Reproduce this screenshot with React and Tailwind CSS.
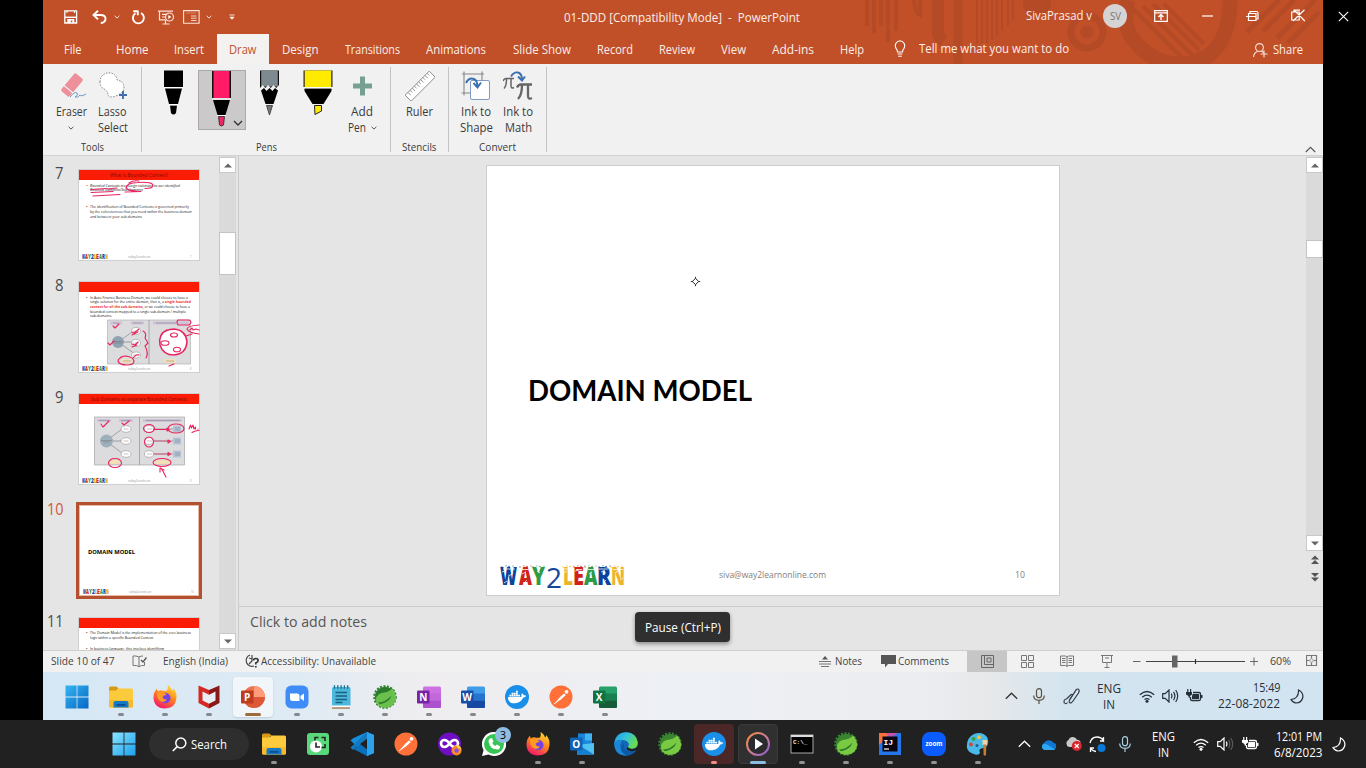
import React, { useLayoutEffect, useRef } from "react";
import { FaDocker } from "react-icons/fa";

/* Text run squeezed or stretched horizontally to occupy a given width. */
function Fit({ w, className = "", children }) {
  const ref = useRef(null);
  useLayoutEffect(() => {
    const el = ref.current;
    el.style.transform = "none";
    const natural = el.getBoundingClientRect().width;
    if (natural > 0) el.style.transform = `scaleX(${w / natural})`;
  }, [w, children]);
  return (
    <span className={"block shrink-0 whitespace-nowrap " + className} style={{ width: w }}>
      <span ref={ref} className="inline-block origin-left whitespace-nowrap">{children}</span>
    </span>
  );
}

function Svg({ w, h, vb, className = "", children }) {
  return (
    <svg width={w} height={h} viewBox={vb || `0 0 ${w} ${h}`} fill="none" className={"block shrink-0 " + className}>
      {children}
    </svg>
  );
}

/* ---------- title bar ---------- */

function HeaderArt() {
  return (
    <Svg w={1280} h={64} vb="43 0 1280 64" className="absolute left-0 top-0">
      <g stroke="#ad4725" opacity="0.6">
        <path d="M867 0V26M874 0V33M881 0V26M888 0V42M896 0V31" strokeWidth="4" />
        <path d="M914 0q1 12 6 15V0" strokeWidth="4" />
        <path d="M938 0v32q0 5 6 9" strokeWidth="12" />
        <path d="M958 0V64" strokeWidth="9" />
        <path d="M977 0V43M982 0V43M987 0V43M992 0V40M997 0V36M1002 0V31M1008 0V26M1013 0V20" strokeWidth="2" />
        <circle cx="1087" cy="32" r="16" strokeWidth="7" />
        <circle cx="1087" cy="32" r="6" fill="#ad4725" />
        <path d="M1128 0q-8 25 8 43q18 21 45 21q48-2 49-64" strokeWidth="15" />
        <path d="M1132 8l50 50M1143 6l50 50M1153 4l46 46M1164 4l40 40" strokeWidth="4" />
        <path d="M1247 32l32-32M1263 31l31-31M1277 38l38-38M1288 43l31-31" strokeWidth="5" />
      </g>
      <path d="M1023 0q-1 15 13 15q16 0 15-15z" fill="#ad4725" opacity="0.6" />
    </Svg>
  );
}

const Chev = ({ c = "#fbe3da", className = "" }) => (
  <Svg w={6} h={4} className={className}><path d="M.6.8 3 3.1 5.4.8" stroke={c} /></Svg>
);

function TitleBar() {
  return (
    <div className="relative flex h-[34px] items-center text-[12px] leading-[16px] text-[#fdeee8]">
      <Svg w={14} h={14} className="ml-[20.5px]">
        <path d="M.8.8h11.8v12.2H.8z" stroke="#fff" strokeWidth="1.3" /><path d="M1 7.3h11.5" stroke="#fff" strokeWidth="1.4" /><path d="M3.3 9h7v4h-2v-2.500h-1.500v2.500H3.300z" fill="#fff" /><path d="M3 1v2M10.500 1v2" stroke="#fff" />
      </Svg>
      <Svg w={16} h={14} className="ml-[14px]">
        <path d="M6 .8 1.500 5 6 9.200M2 5h6.500q5 0 5 3.800T8.800 13" stroke="#fff" strokeWidth="1.900" />
      </Svg>
      <Chev className="ml-[6px]" />
      <Svg w={15} h={15} className="ml-[11.5px]">
        <path d="M4.500 3.200A5.500 5.500 0 1 0 10 3M6.800.5v4.800M2.300 1.200h4.500" stroke="#fff" strokeWidth="1.900" />
      </Svg>
      <Svg w={17} h={15} className="ml-[12px]">
        <path d="M0 1.200h15M1.500 1.500v8.300h6M4 4.300h5M4 7h3M7.500 10v3.500M4.500 14h7" stroke="#fbe3da" strokeWidth="1.200" /><circle cx="11.500" cy="7" r="4" stroke="#fbe3da" strokeWidth="1.200" /><path d="M10.300 5v4l3-2z" fill="#fff" />
      </Svg>
      <Svg w={17} h={14} className="ml-[8px]">
        <path d="M.6.6h15.500v12.600H.6z" stroke="#fbe3da" strokeWidth="1.100" /><path d="M8 6h5.500M8 8.200h5.500M8 10.500h5.500" stroke="#fbe3da" strokeWidth=".9" /><path d="M3 3h10" stroke="#d98468" />
      </Svg>
      <Chev className="ml-[6px]" />
      <Svg w={6} h={6} className="ml-[17px]"><path d="M.5 1h5M1 3.200h4L3 5.200z" stroke="#fff" fill="#fff" strokeWidth=".8" /></Svg>
      <Fit w={236} className="ml-[329px] pt-[2px]">01-DDD [Compatibility Mode]&nbsp; -&nbsp; PowerPoint</Fit>
      <Fit w={66} className="ml-[226px] -mt-[2px]">SivaPrasad v</Fit>
      <span className="ml-[11px] -mt-[3px] flex h-[24px] w-[24px] items-center justify-center rounded-full bg-[#d5d3d4] text-[10px] text-[#777]"><Fit w={11}>SV</Fit></span>
      <Svg w={14} h={12} className="ml-[27px] -mt-[3px]"><path d="M.7.7h12.600v10.600H.7zM.7 2.800h12.600" stroke="#fff" strokeWidth="1.200" /><path d="M7 10V5M4.500 7 7 4.500 9.500 7" stroke="#fff" strokeWidth="1.400" /></Svg>
      <Svg w={11} h={2} className="ml-[34px] -mt-[3px]"><path d="M0 1h11" stroke="#fff" strokeWidth="1.200" /></Svg>
      <Svg w={14} h={12} className="ml-[33px] -mt-[3px]"><path d="M2.500 3.500h7.500v7H2.500zM4 3V1.500h6.300q1.700 0 1.700 1.700V9h-1.500M0 6.500h10" stroke="#fff" strokeWidth="1.200" /></Svg>
      <Svg w={15} h={13} className="ml-[31px] -mt-[3px]"><path d="M.7 3h7.500v8H.7zM3 3V1.200h6M2 12 13.500.8M3 .8 13.800 12" stroke="#fff" strokeWidth="1.200" /></Svg>
    </div>
  );
}

const tab = "flex h-full items-center justify-center pt-px ";

function Tabs() {
  return (
    <div className="relative flex h-[30px] text-[12.5px] leading-[16px] text-[#fdeee8]">
      <div className={tab + "ml-[8px] w-[43px]"}><Fit w={17.500}>File</Fit></div>
      <div className={tab + "ml-[9px] w-[58px]"}><Fit w={32.500}>Home</Fit></div>
      <div className={tab + "w-[56px]"}><Fit w={30}>Insert</Fit></div>
      <div className={tab + "w-[52px] bg-[#f3f2f1] text-[#c0522f]"}><Fit w={27.500}>Draw</Fit></div>
      <div className={tab + "w-[63px]"}><Fit w={36.500}>Design</Fit></div>
      <div className={tab + "w-[81px]"}><Fit w={55}>Transitions</Fit></div>
      <div className={tab + "w-[86px]"}><Fit w={60}>Animations</Fit></div>
      <div className={tab + "w-[85px]"}><Fit w={58}>Slide Show</Fit></div>
      <div className={tab + "w-[61px]"}><Fit w={36}>Record</Fit></div>
      <div className={tab + "w-[64px]"}><Fit w={36}>Review</Fit></div>
      <div className={tab + "w-[49px]"}><Fit w={25}>View</Fit></div>
      <div className={tab + "w-[69px]"}><Fit w={42}>Add-ins</Fit></div>
      <div className={tab + "w-[50px]"}><Fit w={24}>Help</Fit></div>
      <Svg w={12} h={18} className="ml-[17px] mt-[6px]"><path d="M3.500 12q0-2-1.300-3.400A5 5 0 0 1 6 .8a5 5 0 0 1 3.800 7.800Q8.500 10 8.500 12zM3.700 14h4.600M4.200 16.300h3.600" stroke="#fff" strokeWidth="1.100" /></Svg>
      <div className="ml-[13px] flex items-center"><Fit w={150}>Tell me what you want to do</Fit></div>
      <Svg w={15} h={15} className="ml-[184px] mt-[9px]"><circle cx="6.500" cy="4.500" r="3.900" stroke="#fbe3da" strokeWidth="1.100" /><path d="M.6 14q0-4 4-5.500M8.500 8l2 1.500M11 7.500v7M7.500 11h7" stroke="#fbe3da" strokeWidth="1.100" /></Svg>
      <div className="ml-[5px] flex items-center pt-px"><Fit w={30}>Share</Fit></div>
    </div>
  );
}

/* ---------- ribbon ---------- */

const Divider = () => <div className="mt-[3px] h-[85px] w-px shrink-0 bg-[#c4c4c4]" />;
const groupLabel = "flex h-[17px] items-center justify-center text-[11px] leading-[14px] pt-px";

function RibbonButton({ icon, lines, chevron, className }) {
  return (
    <div className={"flex shrink-0 flex-col items-center " + className}>
      <div className="flex h-[40px] items-start justify-center pt-[7px]">{icon}</div>
      {lines.map(([t, w], i) => (
        <div key={i} className="flex h-[16px] items-center gap-[5px]">
          <Fit w={w}>{t}</Fit>
          {chevron && i === lines.length - 1 && lines.length > 1 && <Chev c="#555" />}
        </div>
      ))}
      {chevron && lines.length === 1 && <Chev c="#555" className="mt-[6px]" />}
    </div>
  );
}

function Ribbon() {
  return (
    <div className="flex h-[92px] border-b border-[#d2d2d2] bg-[#f1f1f1] text-[12.5px] leading-[16px] text-[#3b3b3b]">
      <div className="flex w-[98px] flex-col">
        <div className="flex h-[75px] pl-[7px]">
          <RibbonButton className="w-[42px]" chevron lines={[["Eraser", 31]]}
            icon={<Svg w={28} h={28} className="ml-[3px]"><g transform="rotate(-50 13 14)"><rect x="1.500" y="8.500" width="23" height="11" rx="2" fill="#ee8f9c" /><path d="M7.500 8v12" stroke="#f6f1f1" strokeWidth="1.200" /></g><path d="M11 26q5-6 7-4t-2 4q3 1 5-2 1 2 6-1" stroke="#6d9bc8" strokeWidth="1" /></Svg>} />
          <RibbonButton className="w-[41px]" lines={[["Lasso", 28.500], ["Select", 30]]}
            icon={<Svg w={28} h={28}><path d="M1 11C1 4 7 1 12 2q6 2 6 7 7 1 7 8 0 4-6 7-8 4-10 0 0-4-4-6-4-2-4-7z" fill="#fff" stroke="#777" strokeWidth=".9" strokeDasharray="1.500 1.300" /><path d="M24 20v8M20 24h8" stroke="#416eab" strokeWidth="1.900" /></Svg>} />
        </div>
        <div className={groupLabel}><Fit w={23}>Tools</Fit></div>
      </div>
      <Divider />
      <div className="flex w-[248px] flex-col">
        <div className="flex h-[75px] pl-[8px]">
          <Svg w={48} h={61} className="mt-[6px]"><path d="M14 .5h19v16.500H14zM15 18.500h17L28 34h-9zM20 35.500h7L26 43q-2.500 3-5 0z" fill="#000" /><path d="M14 17.500h19M19 34.700h9" stroke="#fff" strokeWidth="1.200" /></Svg>
          <div className="mt-[6px] flex h-[60px] w-[48px] border border-[#aaa] bg-[#cbc9ca]">
            <Svg w={46} h={58} vb="1 1 46 58"><path d="M14 0h19v28H14z" fill="#111" /><path d="M15.500 0h16v28h-16z" fill="#ff1b66" /><path d="M15 30h17l-4.500 15h-8z" fill="#000" /><path d="M14 29h19M19 45.600h9" stroke="#fff" strokeWidth="1.200" /><path d="M20.500 46.500h6L25.500 55q-2 2-4 0z" fill="#ee2862" stroke="#222" strokeWidth=".8" /><path d="M36 51l4 4 4-4" stroke="#333" strokeWidth="1.300" /></Svg>
          </div>
          <Svg w={48} h={61} className="mt-[6px]"><path d="M14 .5h19v20H14z" fill="#111" /><path d="M15.200.5h16.600v16H15.200z" fill="#7e8a90" /><path d="M14 18l2.700-3 2.700 3 2.700-3 2.700 3 2.700-3 2.700 3L33 15v6H14z" fill="#f1f1f1" /><path d="M15 20.500l3-2.500 2.500 3 3-3 3 3 2.500-3 3 2.500L27.500 34h-8z" fill="#000" /><path d="M20.500 35.500h6L23.500 45z" fill="#777" stroke="#333" strokeWidth=".8" /></Svg>
          <Svg w={48} h={61} className="mt-[6px]"><path d="M9.500.5h29V17h-29z" fill="#222" /><path d="M10.700.5h26.600V17H10.700z" fill="#ffeb00" /><path d="M10.500 18.500h27v2.500L29.500 34h-11l-8-13z" fill="#000" /><path d="M20.500 35.500h7V41l-6.500 3.500z" fill="#ffeb00" stroke="#222" /><path d="M10 17.700h28" stroke="#fff" /></Svg>
          <RibbonButton className="w-[40px]" chevron lines={[["Add", 22], ["Pen", 18]]}
            icon={<Svg w={19} h={30}><path d="M9.500 5.500v19M0 15h19" stroke="#76a192" strokeWidth="5" /></Svg>} />
        </div>
        <div className={groupLabel}><Fit w={21}>Pens</Fit></div>
      </div>
      <Divider />
      <div className="flex w-[57px] flex-col">
        <div className="flex h-[75px] justify-center">
          <RibbonButton className="w-[40px]" lines={[["Ruler", 27]]}
            icon={<Svg w={30} h={30}><g transform="rotate(-45 15 15)"><rect x="-2" y="11" width="34" height="8.500" fill="#fff" stroke="#888" strokeWidth=".9" /><path d="M2 11v4M5 11v3M8 11v4M11 11v3M14 11v4M17 11v3M20 11v4M23 11v3M26 11v4M29 11v3" stroke="#888" strokeWidth=".9" /></g></Svg>} />
        </div>
        <div className={groupLabel + " -ml-px"}><Fit w={34.500}>Stencils</Fit></div>
      </div>
      <Divider />
      <div className="flex w-[97px] flex-col">
        <div className="flex h-[75px] pl-[6px]">
          <RibbonButton className="w-[42px]" lines={[["Ink to", 30], ["Shape", 33]]}
            icon={<Svg w={30} h={30}><path d="M1 3h22M3 .5v24M21 .5V9M.5 22H9" stroke="#888" strokeWidth="1.100" /><rect x="9.500" y="9.500" width="19" height="19" rx="1.500" fill="#fff" stroke="#7f9cc4" /><path d="M5 12q3-6 8-4 3 1 3.500 7M12.500 12l4 4.500 3.500-5" stroke="#3b6fae" strokeWidth="1.900" /></Svg>} />
          <RibbonButton className="w-[42px]" lines={[["Ink to", 30], ["Math", 27]]}
            icon={<Svg w={30} h={30}><path d="M0 10q1-2.500 3-2.500h8M3.500 8q0 7-2.500 9.500M8 8v7q0 3 3 1.500" stroke="#666" strokeWidth="1.500" /><path d="M14 16.500q1.500-3 4-3h11M19 14q0 10-4 14M25 14v11q0 4 4 2" stroke="#666" strokeWidth="2.300" /><path d="M8 5.500Q11 .5 15 1.500q3.500 1 4 6M15 5.500l4 4 3-4" stroke="#3b6fae" strokeWidth="1.900" /></Svg>} />
        </div>
        <div className={groupLabel}><Fit w={37}>Convert</Fit></div>
      </div>
      <Divider />
      <Svg w={11} h={7} className="ml-[757.5px] mt-[82px]"><path d="M.8 6l4.700-4.700L10.200 6" stroke="#555" strokeWidth="1.100" /></Svg>
    </div>
  );
}

/* ---------- slides ---------- */

const LETTERS = [
  ["W", 17, 2, "text-[#0b449c]"], ["A", 13, 0, "text-[#cf2317]"], ["Y", 13, 1.5, "text-[#2f9a47]"], ["2", 16, 0.5, "text-[#17459a]"],
  ["L", 10, 0, "text-[#ecb32d]"], ["E", 11, 0, "text-[#cf2317]"], ["A", 13.5, 0, "text-[#2f9a47]"], ["R", 14, 0, "text-[#0b449c]"], ["N", 14, 0, "text-[#ecb32d]"],
];
const DOTS = ["#0b449c", "#cf2317", "#2f9a47", "#ecb32d", "#cf2317", "#2f9a47", "#0b449c", "#ecb32d"];
const DOTX = [2, 20, 33, 63, 74, 85, 99, 111];

function Logo() {
  return (
    <div className="relative flex h-[28px] w-[126px] items-end font-extrabold leading-[28px]">
      {LETTERS.map(([t, w, gap, c], i) => (
        <div key={i} className={c + (t === "2" ? " -mb-[2px] text-[27px] font-normal" : " text-[24px]")} style={{ marginRight: gap }}><Fit w={w}>{t}</Fit></div>
      ))}
      <Svg w={126} h={28} className="absolute left-0 top-0">
        {DOTX.map((x, i) => (
          <g key={i} fill={DOTS[i]} opacity=".85">
            <circle cx={x} cy="5" r=".7" /><circle cx={x + 4} cy="3.800" r=".6" /><circle cx={x + 7} cy="4.600" r=".8" /><circle cx={x + 11} cy="4" r=".6" />
          </g>
        ))}
        <g stroke="#fff" strokeWidth=".9" opacity=".85"><path d="M2 10l3-1M9 14l4-3M22 12l4-2M37 9l3 2M64 11l3-2M75 9l4-1M89 12l3-2M101 10l4-2M115 11l3-2M4 21l3-2M25 20l2-2M78 19l3-1M104 20l2-2M120 18l3-2M3 7h12M21 7.500h9M64 7h4M76 7.500h6M88 7.500h6M99 7h9M113 7.500h10" /></g>
      </Svg>
    </div>
  );
}

const MINI_LETTERS = "WAY2LEARN".split("");
const MINI_TXT = ["text-[#0b449c]", "text-[#cf2317]", "text-[#2f9a47]", "text-[#17459a]", "text-[#dda320]", "text-[#cf2317]", "text-[#2f9a47]", "text-[#0b449c]", "text-[#dda320]"];

function ThumbFooter({ n }) {
  return (
    <div className="flex h-[7px] items-center pl-[3px] text-[3px] leading-[6px] text-[#8a8a8a]">
      <div className="flex w-[26px] text-[6px] font-extrabold">
        {MINI_LETTERS.map((l, i) => <Fit key={i} w={2.900} className={MINI_TXT[i]}>{l}</Fit>)}
      </div>
      <Fit w={22} className="ml-[20px]">siva@way2learnonline.com</Fit>
      <Fit w={n > 9 ? 2.500 : 1.300} className="ml-[40px]">{n}</Fit>
    </div>
  );
}

function ThumbRow({ n, selected, children }) {
  return (
    <div className="flex h-[112px] shrink-0">
      <div className={"flex w-[20px] justify-end text-[15.5px] leading-[20px] -mt-[6px] " + (selected ? "text-[#cb5a3a]" : "text-[#4a4a4a]")}>
        <Fit w={n > 9 ? 16.500 : 8.500}>{n}</Fit>
      </div>
      {selected ? (
        <div className="-mt-[3px] ml-[13px] h-[97px] w-[126px] border-[3px] border-[#b3502f] bg-white">{children}</div>
      ) : (
        <div className="ml-[15px] h-[92px] w-[122px] border border-[#cfcfcf] bg-white">{children}</div>
      )}
    </div>
  );
}

function Ink({ children }) {
  return <Svg w={121} h={91} className="absolute left-0 top-0"><g stroke="#e8245f" strokeWidth="1.100" strokeLinecap="round" strokeLinejoin="round">{children}</g></Svg>;
}

const Bar = ({ w, children }) => (
  <div className="flex h-[9.500px] items-center justify-center bg-[#fb1c05] text-[5px] leading-[8px] text-[#7a0d04]">{children && <Fit w={w}>{children}</Fit>}</div>
);
const Line = ({ w, bullet, children, className = "" }) => (
  <div className={"flex h-[4.700px] items-center pl-[7px] " + className}><span className="w-[4px]">{bullet ? "•" : ""}</span><Fit w={w}>{children}</Fit></div>
);

function Diagram9() {
  return (
    <Svg w={121} h={91} className="absolute left-0 top-0">
      <path d="M15.500 23h90v48h-90z" fill="#dcdcde" stroke="#999" strokeWidth=".6" /><path d="M60.500 23v48" stroke="#999" strokeWidth=".8" />
      <path d="M18 25h14v3H18zM40 25h14v3H40zM64 25h39v3H64z" fill="#cdc2d8" />
      <path d="M27 47l16-12M27 47h16M27 47l16 12M74 35h22M74 47h22M74 60h22" stroke="#777" strokeWidth=".6" />
      <circle cx="27.500" cy="47" r="6.500" fill="#9fb0bd" />
      <g fill="#fff" stroke="#999" strokeWidth=".6"><ellipse cx="47" cy="35" rx="5" ry="3.300" /><ellipse cx="47" cy="47" rx="5" ry="3.300" /><ellipse cx="47" cy="60" rx="5" ry="3.300" /><ellipse cx="70" cy="35" rx="4.500" ry="3.300" /><ellipse cx="70" cy="47" rx="4.500" ry="3.300" /><ellipse cx="70" cy="60" rx="4.500" ry="3.300" /></g>
      <path d="M94 31.500h8v7h-8zM94 43.500h8v7h-8zM94 56.500h8v7h-8z" fill="#b4c3d6" />
      <path d="M31 66h10v4H31zM77 66h14v4H77z" fill="#f3dfb8" />
      <g stroke="#666" strokeWidth=".4"><path d="M20 26.500h10M42 26.500h10M67 26.500h34M44.500 35h5M44.500 47h5M44.500 60h5M68 35h5M68 47h5M68 60h5M22 46.500h11M24 48h7M96 34h5M96 36h5M96 46h5M96 48h5M96 59h5M96 61h5" /></g>
    </Svg>
  );
}

function Diagram8() {
  return (
    <Svg w={121} h={91} className="absolute left-0 top-0">
      <path d="M28.500 38h83v44h-83z" fill="#dcdcde" stroke="#aaa" strokeWidth=".6" /><path d="M70 38v44" stroke="#999" strokeWidth=".8" />
      <path d="M31 39.500h12v3H31zM52 39.500h13v3H52zM74 39.500h36v3H74z" fill="#cdc2d8" />
      <path d="M39 60l17-12M39 60h17M39 60l17 12" stroke="#777" strokeWidth=".6" />
      <circle cx="39" cy="60" r="6" fill="#8fa3b2" />
      <g fill="#fff" stroke="#999" strokeWidth=".6"><ellipse cx="57" cy="49" rx="4.500" ry="3.500" /><ellipse cx="57" cy="61" rx="4.500" ry="3.500" /><ellipse cx="57" cy="73" rx="4.500" ry="3" /></g>
      <circle cx="94" cy="60" r="13.500" fill="#fff" />
      <path d="M42 77h11v4H42zM85 77h12v4H85z" fill="#f3dfb8" />
      <g stroke="#666" strokeWidth=".4"><path d="M34 41h6M54 41h9M77 41h20M34 59.500h10M35 61h8M54 49h6M54 61h6M54 73h6M44 79h8M87 79h8" /></g>
    </Svg>
  );
}

function ThumbPane() {
  return (
    <div className="flex h-full w-[176px] flex-col overflow-hidden pt-[13px]">
      <ThumbRow n={7}>
        <div className="relative flex h-full flex-col text-[4px] leading-[4.700px] text-[#222]">
          <Bar w={58}>What is Bounded Context?</Bar>
          <Line bullet w={90} className="mt-[4px] italic">Bounded Contexts are design solutions to our identified</Line>
          <Line w={53} className="italic">Business Domains/Sub-domains</Line>
          <Line bullet w={99} className="mt-[12.500px]">The identification of Bounded Contexts is governed primarily</Line>
          <Line w={102}>by the cohesiveness that you need within the business domain</Line>
          <Line w={52}>and between your sub-domains</Line>
          <div className="mt-auto"><ThumbFooter n={7} /></div>
          <Ink><path d="M12 19.500l15-1M28 19l10-1M12 22.500l22-1M14 26l27-1.500M50 13q4-3 10-2M47 18q0-5 12-5.500 15-1 15 3 0 3-8 3M47 17q1 4 10 4M46 22l16-.5" /></Ink>
        </div>
      </ThumbRow>
      <ThumbRow n={8}>
        <div className="relative flex h-full flex-col text-[4px] leading-[4.700px] text-[#111]">
          <Bar />
          <Line bullet w={98} className="mt-[4px]">In Auto Finance Business Domain, we could choose to have a</Line>
          <Line w={101}>single solution for the entire domain, that is, a <b className="text-[#e33]">single bounded</b></Line>
          <Line w={100}><b className="text-[#e33]">context for all the sub-domains</b>, or we could choose to have a</Line>
          <Line w={96}>bounded context mapped to a single sub-domain / multiple</Line>
          <Line w={22}>sub-domains.</Line>
          <div className="mt-auto"><ThumbFooter n={8} /></div>
          <Diagram8 />
          <Ink><path d="M34 44l2 2 4-4M29 61l2 2 4-4M53 50l2 1 5-4M53 53l6-3M53 62l3 1 3-3M53 65l5-2M64 49q4 2 2 7l3 5-3 3q4 7 1 12" /><path d="M43 75q-4 2-4 4 1 4 9 4 7 0 7-4-1-4-8-5-3 0-5 1M54 76q3-4 6-3" /><path d="M88 48q-9 4-7 15 3 10 14 10 12-1 13-13-1-12-13-13-5 0-8 2z" strokeWidth="1.500" /><ellipse cx="95" cy="53" rx="3.500" ry="2" /><ellipse cx="86" cy="61" rx="4" ry="2.300" /><ellipse cx="98" cy="67.500" rx="3.500" ry="2.300" /><path d="M99 38h11q4 2 0 5H99q-2-3 0-5M107 54l6-2M120 43q-12 1-12 4 2 4 12 5M111 48l2-2 1 2 3-1 3 1M90 84l5-2" /></Ink>
        </div>
      </ThumbRow>
      <ThumbRow n={9}>
        <div className="relative flex h-full flex-col text-[4px]">
          <Bar w={96}>Sub Domains as separate Bounded Contexts</Bar>
          <div className="mt-auto"><ThumbFooter n={9} /></div>
          <Diagram9 />
          <Ink><path d="M22 30l2 3 6-6M43 29l2 2 5-4M75 35.500h14" /><path d="M75 47h14M75 60h14" strokeWidth=".6" /><ellipse cx="70" cy="34.500" rx="5.500" ry="4" /><ellipse cx="70" cy="48" rx="4.500" ry="5" /><ellipse cx="97" cy="34.500" rx="8" ry="4.500" /><ellipse cx="36" cy="69" rx="6.500" ry="4.500" /><ellipse cx="83" cy="68.500" rx="9" ry="4" /><path d="M88 34l2 1.500-2 1.500zM89 46l2.500 1.500-2.500 1.500zM89 58.500l2.500 1.500-2.500 1.500zM87 83q-3-6-5-9M81 78v-4l4 2M110 35l1.500-4 1 3 1.500-3 1 4 1.500-2v2M119 35v.3M113 38.500q3-2 7-2" /></Ink>
        </div>
      </ThumbRow>
      <ThumbRow n={10} selected>
        <div className="flex h-full flex-col border border-[#e8b9a6]">
          <Fit w={47} className="ml-[7.5px] mt-[42px] text-[6px] font-bold leading-[8px] text-black">DOMAIN MODEL</Fit>
          <div className="mt-auto"><ThumbFooter n={10} /></div>
        </div>
      </ThumbRow>
      <ThumbRow n={11}>
        <div className="flex h-full flex-col text-[4px] leading-[4.700px] text-[#111]">
          <Bar />
          <Line bullet w={101} className="mt-[3.500px]">The Domain Model is the implementation of the core business</Line>
          <Line w={64}>logic within a specific Bounded Context.</Line>
          <Line bullet w={74} className="mt-[6.500px]">In business language, this involves identifying</Line>
        </div>
      </ThumbRow>
    </div>
  );
}

const scrollBtn = "flex h-[16px] w-full shrink-0 items-center justify-center border border-[#c9c9c9] bg-white";
const Up = () => <Svg w={8} h={5}><path d="M0 4.500l4-4 4 4z" fill="#666" /></Svg>;
const Down = () => <Svg w={8} h={5}><path d="M0 .5l4 4 4-4z" fill="#666" /></Svg>;

function Slide() {
  return (
    <div className="flex h-[431px] w-[574px] flex-col border border-[#cdcdcd] bg-white">
      <Fit w={224} className="ml-[41px] mt-[206px] font-[Lato,sans-serif] text-[28px] font-bold leading-[36px] text-black">DOMAIN MODEL</Fit>
      <div className="mb-[4px] mt-auto flex h-[30px] items-center text-[9px] text-[#808080]">
        <div className="ml-[12.5px]"><Logo /></div>
        <Fit w={107} className="ml-[93.5px] -mt-[2px]">siva@way2learnonline.com</Fit>
        <Fit w={10} className="ml-[189px] -mt-[2px]">10</Fit>
      </div>
    </div>
  );
}

function Workspace() {
  return (
    <div className="flex h-[494px] bg-[#e5e5e5]">
      <ThumbPane />
      <div className="flex w-[17px] flex-col bg-[#dadada] pt-px">
        <div className={scrollBtn}><Up /></div>
        <div className="mt-[59px] h-[43px] w-full border border-[#c4c4c4] bg-white" />
        <div className={scrollBtn + " mb-px mt-auto"}><Down /></div>
      </div>
      <div className="w-[3px] border-r border-[#cacaca]" />
      <div className="flex flex-1 flex-col">
        <div className="flex h-[450px]">
          <div className="flex-1 pl-[247px] pt-[9px]"><Slide /></div>
          <div className="flex w-[17px] flex-col bg-[#dadada] pt-px">
            <div className={scrollBtn}><Up /></div>
            <div className="mt-[67px] h-[18px] w-full border border-[#c4c4c4] bg-white" />
            <div className={scrollBtn + " mt-auto"}><Down /></div>
            <div className="flex h-[55px] flex-col items-center gap-[9px] bg-[#e5e5e5] pt-[4px]">
              <Svg w={8} h={9}><path d="M0 4.500l4-4 4 4zM0 9l4-4 4 4z" fill="#555" /></Svg>
              <Svg w={8} h={9}><path d="M0 0l4 4 4-4zM0 4.500l4 4 4-4z" fill="#555" /></Svg>
            </div>
          </div>
        </div>
        <div className="flex h-[44px] border-t border-[#cacaca] pl-[11px] pt-[5px] text-[14px] leading-[20px] text-[#555]"><Fit w={117}>Click to add notes</Fit></div>
      </div>
    </div>
  );
}

function StatusBar() {
  const cell = "flex h-full w-[40px] items-center justify-center";
  return (
    <div className="flex h-[22px] items-center border-t border-[#cfcfcf] bg-[#f1f1f1] pb-px text-[11px] leading-[14px] text-[#444]">
      <Fit w={63.500} className="ml-[7.500px]">Slide 10 of 47</Fit>
      <Svg w={15} h={13} className="ml-[18px]"><path d="M7 2v10M7 2q-3-1.500-6-1v9.500q4-.5 6 1.200 2-1.700 5.500-1.200V7M7 2q2-1.200 4-1" stroke="#777" /><path d="M9 5l2 2 3.500-4.500" stroke="#555" strokeWidth="1.300" /></Svg>
      <Fit w={65} className="ml-[15.5px]">English (India)</Fit>
      <Svg w={14} h={14} className="ml-[17px]"><path d="M5 1A5.500 5.500 0 1 0 9 12M7 1v6l-3 3M4 4l3 1" stroke="#444" strokeWidth="1.200" /><path d="M8.500 6.500q0-2 2.300-2t2.300 2q0 1.500-2.300 2.500v1.500M10.800 12v1.500" stroke="#333" strokeWidth="1.700" /></Svg>
      <Fit w={115} className="ml-[2.5px]">Accessibility: Unavailable</Fit>
      <Svg w={12} h={11} className="ml-[443px]"><path d="M6 0l3 3.500H3z" fill="#555" /><path d="M0 5.500h12M0 8h12M2 10.500h8" stroke="#777" /></Svg>
      <Fit w={27} className="ml-[4px]">Notes</Fit>
      <Svg w={15} h={13} className="ml-[19px]"><path d="M0 0h15v9H7l-3 3.500V9H0z" fill="#555" /></Svg>
      <Fit w={51} className="ml-[2px]">Comments</Fit>
      <div className="-mb-px ml-[18px] flex h-[21px] w-[40px] items-center justify-center bg-[#c6c6c6]"><Svg w={13} h={13}><path d="M.5.5h12v12H.500zM3.500.5v9M3.500 9.500h9M6 3h4v4H6z" stroke="#666" /></Svg></div>
      <div className={cell}><Svg w={13} h={13}><path d="M.5.5h5v5h-5zM7.500.5h5v5h-5zM.5 7.500h5v5h-5zM7.500 7.500h5v5h-5z" stroke="#777" /></Svg></div>
      <div className={cell}><Svg w={14} h={12}><path d="M7 1.500v10M.5 1h5L7 2l1.500-1h5v9.500h-5L7 11.500l-1.500-1h-5zM2 3.500h3.500M2 5.500h3.500M2 7.500h3.500M8.500 3.500H12M8.500 5.500H12M8.500 7.500H12" stroke="#777" /></Svg></div>
      <div className={cell}><Svg w={12} h={13}><path d="M0 .5h12M1.500.5v7h9v-7M6 7.500v5M3.500 12.500h5M4 3h4" stroke="#777" /></Svg></div>
      <Svg w={128} h={16} className="ml-[4px]"><path d="M2 8.500h7.500M119 8.500h8M123 4.500v8" stroke="#666" /><path d="M15 8.500h99" stroke="#444" /><path d="M41 2.500h5.500v12H41z" fill="#666" /><path d="M64.500 6v5" stroke="#333" strokeWidth="1.200" /></Svg>
      <Fit w={21} className="ml-[11px]">60%</Fit>
      <Svg w={12} h={12} className="ml-[14.5px]"><path d="M.5.5h10v10H.500zM5.500.5v3M5.500 7.500v3M.5 5.500h3M7.500 5.500h3" stroke="#777" strokeWidth="1.200" /><path d="M4 4h3v3H4z" stroke="#999" strokeWidth=".7" /></Svg>
    </div>
  );
}

/* ---------- app icons, drawn on a 24px grid ---------- */

const WindowsIcon = ({ light }) => (
  <Svg w={24} h={24}><defs><linearGradient id={light ? "winL" : "winD"} x1="0" y1="0" x2="1" y2="1"><stop stopColor={light ? "#8ce4ff" : "#35b5f0"} /><stop offset="1" stopColor={light ? "#1aa0ee" : "#0767c4"} /></linearGradient></defs><path d="M.5.500h11.100v11.100H.500zM12.400.500h11.100v11.100H12.400zM.5 12.400h11.100v11.100H.500zM12.400 12.400h11.100v11.100H12.400z" fill={`url(#${light ? "winL" : "winD"})`} /></Svg>
);
const FolderIcon = () => (
  <Svg w={24} h={24}><path d="M0 3q0-1.500 1.500-1.500h6L10 4h-2v4H0z" fill="#d89a12" /><path d="M0 5.500h7.500L9.500 3.500h13q1.500 0 1.500 1.500v16q0 1.500-1.500 1.500h-21Q0 22.500 0 21z" fill="#fccb3d" /><path d="M0 15h24v6q0 1.500-1.500 1.500h-21Q0 22.500 0 21z" fill="#f7ba28" /><path d="M4.500 22.500V18q0-2 2-2h11q2 0 2 2v4.500z" fill="#1579c6" /><path d="M7.500 19h9v1.800h-9z" fill="#0b4f91" /></Svg>
);
const FirefoxIcon = ({ id }) => (
  <Svg w={24} h={24}><defs><linearGradient id={id} x1=".8" y1="0" x2=".3" y2="1"><stop stopColor="#ffe53b" /><stop offset=".45" stopColor="#ff8a1e" /><stop offset="1" stopColor="#f5156c" /></linearGradient></defs><path d="M14.500 0q4 2.500 4.500 5.500 1.500-.5 1-2.500 4 4 3.500 10Q22.500 23.500 12 23.500.8 23 .5 12.500.6 7 4 3.500q0 2 1 2.800Q7 5 9 5.500q3 .5 5 0 1.500-2.500.5-5.500z" fill={`url(#${id})`} /><circle cx="12.200" cy="13" r="5.300" fill="#7543e5" /><path d="M4 8q3-2 5.500-.5Q13 8 13.500 10q-3 0-4 2 1 3 4.500 2.500-2 3.500-6 2Q3.500 14 4 8z" fill="#ff9a23" /></Svg>
);
const McAfeeIcon = () => (
  <Svg w={24} h={24}><path d="M1.500.5 12 5v18.500L1.500 18z" fill="#d52a23" /><path d="M22.500.5 12 5v18.500L22.500 18z" fill="#89181a" /><path d="M5.500 6.500 12 9.800l6.500-3.300v9L12 18.800l-6.500-3.300z" fill="#e8eef4" /></Svg>
);
function OfficeIcon({ letter, body, dark, mid, badge, round }) {
  return (
    <Svg w={24} h={24}>
      {round ? (<><circle cx="13" cy="12" r="11" fill={body} /><path d="M13 1a11 11 0 0 1 11 11H13z" fill={mid} /><path d="M2 12h22a11 11 0 0 1-22 0z" fill={dark} opacity=".65" /></>) : (
        <><rect x="6" y="1.500" width="18" height="21.500" rx="1.500" fill={body} /><path d="M6 8.500h18v7H6z" fill={mid} /><path d="M6 15.500h18V21.500q0 1.500-1.500 1.500h-15Q6 23 6 21.500z" fill={dark} /></>
      )}
      <rect x="0" y="5.500" width="12.500" height="13" rx="1" fill={badge} />
      <text x="6.200" y="15.600" textAnchor="middle" fontFamily="Open Sans" fontWeight="700" fontSize="10" fill="#fff">{letter}</text>
    </Svg>
  );
}
const OutlookIcon = () => (
  <Svg w={24} h={24}><path d="M8 1.500h14v14H8z" fill="#1b86d8" /><path d="M15 1.500h7v7h-7z" fill="#41b4f2" /><path d="M7 13l17-2v11.500H7z" fill="#50c3f2" /><path d="M7 12l17 10.500H8.500Q7 22.500 7 21z" fill="#1580d0" /><rect x="0" y="5.500" width="12.500" height="13" rx="1" fill="#0f63b6" /><text x="6.200" y="15.600" textAnchor="middle" fontFamily="Open Sans" fontWeight="700" fontSize="10" fill="#fff">O</text></Svg>
);
const ZoomCamIcon = () => (
  <Svg w={24} h={24}><rect x=".5" y=".5" width="23" height="23" rx="6" fill="#3f8cf7" /><path d="M5 8.500h7q2.500 0 2.500 2.500v5h-7Q5 16 5 13.500zM15.500 11l3.500-2.500v7.500l-3.500-2.500z" fill="#fff" /></Svg>
);
const NotepadIcon = () => (
  <Svg w={24} h={24}><rect x="3" y="2" width="18.500" height="20" rx="1.500" fill="#4db8dc" /><path d="M3 20.500h18.500v1.800q0 1-1 1H4q-1 0-1-1z" fill="#fff" /><path d="M3 23h18" stroke="#9b6b3d" strokeWidth="1.300" /><path d="M5.500.3v3.500M8.800.3v3.500M12.100.3v3.500M15.400.3v3.500M18.700.3v3.500" stroke="#176e91" strokeWidth="1.300" /><path d="M6.500 7.500h11.500M6.500 11h11.500M6.500 14.500h11.500M6.500 17.500h7" stroke="#17627f" strokeWidth="1.300" /></Svg>
);
const SpringIcon = ({ bright }) => (
  <Svg w={24} h={24}><circle cx="12" cy="12" r="10.200" fill={bright ? "#39852f" : "#2b7b2d"} /><circle cx="12" cy="12" r="10.800" stroke={bright ? "#39852f" : "#2b7b2d"} strokeWidth="2" strokeDasharray="2 1.500" /><path d="M3.500 18.500Q1.500 10 8.500 8q6.500-.5 11-4.500Q23 8 23.300 13q-1 9-11.300 10-5.500-.5-8.500-4.500z" fill={bright ? "#79c943" : "#6ac04d"} /><path d="M5 17.500q8-.5 13.500-7-2 7-11.500 8.700z" fill="#2f7a2c" /></Svg>
);
const DockerIcon = () => (
  <span className="flex h-[24px] w-[24px] shrink-0 items-center justify-center rounded-full bg-[#198fe9]"><FaDocker size={18} color="#fff" /></span>
);
const PostmanIcon = () => (
  <Svg w={24} h={24}><circle cx="12" cy="12" r="11.500" fill="#ff7139" /><path d="M6.500 17.500l4.500-5.500 4-3.500 1.800 1.500-4.300 4L7 17.800z" fill="#fff" /><circle cx="17.500" cy="6.800" r="1.900" fill="#fff" /><path d="M5 19l5-4M10 13l2 1.500" stroke="#fff" strokeWidth=".9" /></Svg>
);
const GreenClipIcon = () => (
  <Svg w={24} h={24}><rect x="1" y="1" width="22" height="22" rx="3" fill="#58d77b" /><circle cx="10" cy="14.500" r="6" fill="#fff" /><path d="M10 10.500v4.500h4M9 8.500V5.500h3.500M15.500 5.500H19V9M19 12v3.500h-3.500" stroke="#242424" strokeWidth="1.600" /></Svg>
);
const CodeIcon = () => (
  <Svg w={24} h={24}><path d="M17 0l7 3v18l-7 3L.5 8.500 3 6.300z" fill="#168ddb" /><path d="M17 24 .5 15.500 3 17.700 17.500 6.500z" fill="#0b70bb" /><path d="M.5 15.500 17 0v6.500L3 17.700z" fill="#1378c0" /><path d="M17 0l7 3v18l-7 3z" fill="#2ba2ed" /><path d="M17 6.800v10.400L10 12z" fill="#212121" /></Svg>
);
const InfinityIcon = () => (
  <Svg w={24} h={24}><circle cx="11.500" cy="12" r="11.500" fill="#6e0fc4" /><path d="M11.500 11.500q-2.500-3.500-5-3.500a3.500 3.500 0 0 0 0 7q2.500 0 5-3.500t5-3.500a3.500 3.500 0 0 1 0 7q-2.500 0-5-3.500z" stroke="#fff" strokeWidth="2.600" /><circle cx="18.500" cy="18.500" r="5" fill="#ff8b27" /><circle cx="18.500" cy="18.500" r="2.200" fill="#8553e5" /><path d="M19 12q4 2 4.500 6-1-2-4-2z" fill="#ffd94a" /></Svg>
);
const WhatsAppIcon = () => (
  <span className="relative flex h-[24px] w-[24px] shrink-0 items-center justify-center">
    <Svg w={24} h={24} className="absolute left-0 top-0"><path d="M12 0a12 12 0 1 1-5.500 22.500L0 24l1.600-6A12 12 0 0 1 12 0z" fill="#fff" /><circle cx="12" cy="12" r="10" fill="#36c552" /></Svg>
    <Svg w={14} h={14} className="relative"><path d="M3 1.500 5 1l1.500 3.500L5.300 6q1 2 2.900 2.900L9.800 7.600l3.300 1.700q0 3.200-2.600 3.300Q3 12.500 1.500 4.500 1.500 2.500 3 1.500z" fill="#fff" /></Svg>
    <span className="absolute -right-[5px] -top-[5px] flex h-[16px] w-[16px] items-center justify-center rounded-full bg-[#8fbce0] text-[10.5px] leading-[14px] text-black">3</span>
  </span>
);
const EdgeIcon = () => (
  <Svg w={24} h={24}><defs><linearGradient id="edgeTop" x1="0" y1="0" x2="1" y2=".5"><stop stopColor="#1c9de0" /><stop offset=".5" stopColor="#33c2dd" /><stop offset="1" stopColor="#68dc4c" /></linearGradient></defs><circle cx="12" cy="12" r="11.800" fill="#1166b8" /><path d="M.3 11Q1.500.5 12 .2 22.500.5 23.800 10.500q0 6-6 6.300-4.500 0-4-2 1.500-1.300 1-3.300Q13 8 8.500 8 3 8 .3 11z" fill="url(#edgeTop)" /><path d="M.3 11Q3 7 8.500 8q-4 4.500-1.500 10 1.500 3.500 5 5.500Q.5 23.500.3 11z" fill="#1a87d7" /><path d="M10 11.500q-1.500 8 5.500 8 3.500 0 6.500-2 1 1-1 2.500-4 4-9.500 2.500Q6 20 7.500 14.500 8.500 12 10 11.500z" fill="#0c59a4" /><path d="M14 14.800q1 2.500 6 2 2-.5 3.500-2.500l1 1.700-2 2.500q-8 2-10-2 .5-1 1.500-1.700z" fill="#212121" /></Svg>
);
const PlayerIcon = () => (
  <Svg w={24} h={24}><defs><linearGradient id="ring" x1="0" y1="0" x2="1" y2="1"><stop stopColor="#f58b3c" /><stop offset=".5" stopColor="#cf7f8e" /><stop offset="1" stopColor="#8d5cd6" /></linearGradient></defs><circle cx="12" cy="12" r="11" fill="#2c2c30" stroke="url(#ring)" strokeWidth="2" /><path d="M9 6.500v11l8-5.500z" fill="#fff" /></Svg>
);
const TerminalIcon = () => (
  <Svg w={24} h={24}><rect x="1" y="3" width="22" height="18" fill="#000" stroke="#a9a9a9" /><path d="M1 3h22v2H1z" fill="#dcdcdc" /><text x="3" y="12" fontFamily="Liberation Mono" fontWeight="700" fontSize="6" fill="#eee">C:\_</text></Svg>
);
const IdeaIcon = () => (
  <Svg w={24} h={24}><path d="M1 1h22v22H1z" fill="#2476e9" /><path d="M1 1h12L1 13z" fill="#f6713b" /><path d="M8 1h12l-8 5z" fill="#c94fa8" /><path d="M4.500 4.500h15v15h-15z" fill="#0a0410" /><text x="5.500" y="12.500" fontFamily="Liberation Mono" fontWeight="700" fontSize="8" fill="#fff">IJ</text><path d="M6 17h5" stroke="#fff" strokeWidth="1.200" /></Svg>
);
const ZoomIcon = () => (
  <Svg w={24} h={24}><rect width="24" height="24" rx="8" fill="#0b5cff" /><text x="12" y="13.800" textAnchor="middle" textLength="17" lengthAdjust="spacingAndGlyphs" fontFamily="Open Sans" fontWeight="700" fontSize="6.500" fill="#fff">zoom</text></Svg>
);
const PaintIcon = () => (
  <Svg w={24} h={24}><path d="M1 16Q0 6 8 2q8-3 13 3 3 6-1 10-3 1-6 2-1 2 0 4-1 2.500-5 1.500-7-2-8-6.500z" fill="#49b9e8" /><circle cx="5" cy="12.500" r="2" fill="#d6473a" /><circle cx="7.500" cy="7" r="2" fill="#3aa14c" /><circle cx="13" cy="5.300" r="2" fill="#f4c53a" /><circle cx="11" cy="13.500" r="1.500" fill="#14638f" /><path d="M16.500 8h4.500v5h-4.500z" fill="#ead5a8" /><path d="M17.300 12.500h3l-.3 10.500q-1.200 1.500-2.400 0z" fill="#c77d32" /></Svg>
);

/* ---------- tray glyphs ---------- */

const Wifi = ({ c }) => (
  <Svg w={16} h={13}><path d="M.8 4.800Q8-1.800 15.200 4.800M3.200 7.200q4.800-4 9.600 0M5.500 9.600q2.500-2 5 0" stroke={c} strokeWidth="1.300" /><circle cx="8" cy="11.300" r="1.500" fill={c} /></Svg>
);
const Volume = ({ c, dim }) => (
  <Svg w={17} h={14}><path d="M.7 4.700h2.500L7 1v12L3.200 9.300H.700z" stroke={c} strokeWidth="1.200" /><path d="M9.300 4.700q1.500 2.300 0 4.600" stroke={c} strokeWidth="1.200" /><path d="M11.500 2.800q2.800 4.200 0 8.400M13.700 1q4 6 0 12" stroke={dim} strokeWidth="1.200" /></Svg>
);
const Battery = ({ c }) => (
  <Svg w={17} h={14}><path d="M7 3.500h6q1.500 0 1.500 1.500v5q0 1.500-1.500 1.500H6q-1.500 0-1.500-1.500V8" stroke={c} strokeWidth="1.300" /><path d="M6.500 5h6.500v5H6V7.500zM15 6h1.500v3H15zM0 3h6v2.500L4 7v1.500H2.500V7L0 5.500zM1.200 0h1.200v3H1.200zM4 0h1.200v3H4z" fill={c} /></Svg>
);
const Moon = ({ c }) => (
  <Svg w={14} h={15}><path d="M8.500 1q5 2.500 4.300 7.500Q11.500 14 6 14 2.500 13.500 1 10.500 9 9.500 8.500 1z" stroke={c} strokeWidth="1.200" /></Svg>
);
const Mic = ({ c }) => (
  <Svg w={12} h={16}><rect x="3.500" y=".7" width="5" height="9" rx="2.500" stroke={c} strokeWidth="1.200" /><path d="M.7 7.500q0 4.800 5.300 4.800t5.300-4.800M6 12.500V16" stroke={c} strokeWidth="1.200" /></Svg>
);
const Caret = ({ c }) => <Svg w={13} h={8}><path d="M.8 6.800 6.500 1.200l5.700 5.600" stroke={c} strokeWidth="1.300" /></Svg>;
const Pair = ({ a, b, wa, wb, className }) => (
  <div className={"flex flex-col text-[12px] leading-[16px] " + className}><Fit w={wa}>{a}</Fit><Fit w={wb}>{b}</Fit></div>
);

function AppCell({ children, mark, box = "" }) {
  return (
    <div className="flex h-full w-[44px] shrink-0 justify-center">
      <div className={"mt-[4px] flex h-[40px] w-[40px] flex-col items-center rounded-[4px] pt-[8px] " + box}>
        {children}
        {mark && <span className={"mt-[4.5px] h-[3px] shrink-0 rounded-full " + mark} />}
      </div>
    </div>
  );
}

function InnerTaskbar() {
  const m = "w-[6px] bg-[#84898f]";
  return (
    <div className="flex h-[48px] items-center bg-[linear-gradient(90deg,#d5e7f5_0%,#dfebf4_20%,#efedef_30%,#edf0f5_50%,#ecedf0_68%,#e6e8ea_74%,#d3e4ef_80%,#d2e4f1_100%)] text-[#26303a]">
      <div className="ml-[11.5px] flex h-full pt-[0.5px]">
        <AppCell><WindowsIcon /></AppCell>
        <AppCell mark={m}><FolderIcon /></AppCell>
        <AppCell mark={m}><FirefoxIcon id="ffA" /></AppCell>
        <AppCell mark={m}><McAfeeIcon /></AppCell>
        <AppCell mark="w-[16px] bg-[#9c6c3a]" box="w-[37px] bg-[#f1f6fb] shadow-sm"><OfficeIcon round letter="P" body="#ee7350" mid="#ff9b7b" dark="#d24a28" badge="#bf3d1d" /></AppCell>
        <AppCell mark={m}><ZoomCamIcon /></AppCell>
        <AppCell mark={m}><NotepadIcon /></AppCell>
        <AppCell mark={m}><SpringIcon /></AppCell>
        <AppCell mark={m}><OfficeIcon letter="N" body="#cc70e2" mid="#c368dc" dark="#ac52ce" badge="#7822a6" /></AppCell>
        <AppCell mark={m}><OfficeIcon letter="W" body="#3f9ce8" mid="#2774cf" dark="#1748a4" badge="#174ea8" /></AppCell>
        <AppCell mark={m}><DockerIcon /></AppCell>
        <AppCell mark={m}><PostmanIcon /></AppCell>
        <AppCell mark={m}><OfficeIcon letter="X" body="#27a26a" mid="#198050" dark="#175c39" badge="#0f7440" /></AppCell>
      </div>
      <div className="ml-[378px] flex items-center">
        <Caret c="#333" />
        <div className="ml-[15px]"><Mic c="#5c5145" /></div>
        <Svg w={17} h={17} className="ml-[18px]"><path d="M9.500 7.500 13 2q2-2 3 0 .5 1-.5 3L10 13q-2 3-3.500 1.500-1-1.500 1-4.500L12 4M1.500 15.500q-1.500-4 2-4.500l4-4q2-1.500 2 .5L6 13M2 15.500q1.500.5 2.500-1" stroke="#333b44" strokeWidth="1.200" /></Svg>
      </div>
      <Pair className="ml-[17.5px] items-center pt-px" a="ENG" b="IN" wa={24} wb={12} />
      <div className="ml-[18px] flex items-center gap-[7px]"><Wifi c="#26303a" /><Volume c="#26303a" dim="#26303a" /><Battery c="#26303a" /></div>
      <Pair className="ml-[15px] items-end" a="15:49" b="22-08-2022" wa={27.500} wb={62} />
      <div className="ml-[9.5px]"><Moon c="#26303a" /></div>
    </div>
  );
}

function OuterTaskbar() {
  const m = "w-[6px] bg-[#929292]";
  return (
    <div className="flex h-[48px] w-[1366px] items-center bg-[#212121] text-white">
      <div className="ml-[101.5px] flex h-full"><AppCell><WindowsIcon light /></AppCell></div>
      <div className="ml-[3.5px] flex h-[32px] w-[100px] items-center rounded-full bg-[#2e2e2e] pl-[23px] pt-px text-[12px]">
        <Svg w={15} h={15}><circle cx="8.800" cy="6" r="5" stroke="#fff" strokeWidth="1.500" /><path d="M5.200 9.600.8 14" stroke="#fff" strokeWidth="1.700" /></Svg>
        <Fit w={36} className="ml-[4px]">Search</Fit>
      </div>
      <div className="ml-[3px] flex h-full">
        <AppCell mark={m}><FolderIcon /></AppCell>
        <AppCell><GreenClipIcon /></AppCell>
        <AppCell><CodeIcon /></AppCell>
        <AppCell><PostmanIcon /></AppCell>
        <AppCell><InfinityIcon /></AppCell>
        <AppCell><WhatsAppIcon /></AppCell>
        <AppCell mark={m}><FirefoxIcon id="ffB" /></AppCell>
        <AppCell mark={m}><OutlookIcon /></AppCell>
        <AppCell><EdgeIcon /></AppCell>
        <AppCell><SpringIcon bright /></AppCell>
        <AppCell mark="w-[6px] bg-[#f08d86]" box="bg-[#4b2728]"><DockerIcon /></AppCell>
        <AppCell mark="w-[16px] bg-[#8abde0]" box="border border-[#3b3b3b] bg-[#303030] pt-[7px]!"><PlayerIcon /></AppCell>
        <AppCell mark={m}><TerminalIcon /></AppCell>
        <AppCell mark={m}><SpringIcon bright /></AppCell>
        <AppCell mark={m}><IdeaIcon /></AppCell>
        <AppCell mark={m}><ZoomIcon /></AppCell>
        <AppCell mark={m}><PaintIcon /></AppCell>
      </div>
      <div className="ml-[18px] flex items-center">
        <Caret c="#fff" />
        <Svg w={16} h={11} className="ml-[10px]"><path d="M4 11a4 4 0 0 1-.5-7.500A5 5 0 0 1 12 3.500a3.800 3.800 0 0 1 0 7.500z" fill="#0f78d4" /><path d="M1 6.500q2-3 5-1l8 5q-1 .5-2 .5H4Q.5 10.500 1 6.500z" fill="#2ea8f0" /></Svg>
        <Svg w={17} h={14} className="ml-[8px]"><path d="M4 10a3.800 3.800 0 0 1-.5-7A4.600 4.600 0 0 1 12 2.800 3.600 3.600 0 0 1 12 10z" fill="#c9c9c9" /><circle cx="11.800" cy="9" r="5" fill="#d9252d" /><path d="M9.800 7l4 4M13.800 7l-4 4" stroke="#fff" strokeWidth="1.200" /></Svg>
        <Svg w={17} h={17} className="ml-[7px]"><path d="M1 7q1.500-6 7-6 4 0 6.500 3.500V1M14.500 5H11M1.500 16v-4H5M2 12.500Q4 15.500 7 15.500" stroke="#fff" strokeWidth="1.300" /><circle cx="12.500" cy="12" r="4" fill="#0c78d8" /></Svg>
        <div className="ml-[13px]"><Mic c="#a6d2e4" /></div>
      </div>
      <Pair className="ml-[20.5px] items-center pt-px" a="ENG" b="IN" wa={23} wb={11} />
      <div className="ml-[18.5px] flex items-center gap-[8px]"><Wifi c="#fff" /><Volume c="#fff" dim="#5b5b5b" /><Battery c="#fff" /></div>
      <Pair className="ml-[14.5px] items-end pt-px" a="12:01 PM" b="6/8/2023" wa={46} wb={48.500} />
      <div className="ml-[9.5px]"><Moon c="#fff" /></div>
    </div>
  );
}

export default function App() {
  return (
    <div className="relative flex h-[768px] w-[1366px] flex-col overflow-hidden bg-black font-['Open_Sans','Noto_Sans',sans-serif]">
      <div className="flex h-[720px]">
        <div className="ml-[43px] flex w-[1280px] flex-col">
          <div className="relative h-[64px] bg-[#c15028]">
            <HeaderArt />
            <TitleBar />
            <Tabs />
          </div>
          <Ribbon />
          <Workspace />
          <StatusBar />
          <InnerTaskbar />
        </div>
        <Svg w={11} h={11} className="ml-[15px] mt-[11px]"><path d="M.8.8l9.400 9.400M10.200.8.8 10.200" stroke="#fff" strokeWidth="1.100" /></Svg>
      </div>
      <OuterTaskbar />
      <Svg w={11} h={11} className="absolute left-[690px] top-[276px]"><path d="M5.500 2.200 7 4l1.800 1.500L7 7 5.500 8.800 4 7 2.200 5.500 4 4zM5.500 .8v1.500M5.500 8.700v1.500M.8 5.500h1.500M8.700 5.500h1.500" stroke="#333" /></Svg>
      <div className="absolute left-[635px] top-[612px] flex h-[30px] w-[95px] items-center justify-center rounded-[4px] bg-[#2f2f2f] text-[12px] leading-[16px] text-white shadow-[0_2px_4px_rgba(0,0,0,0.4)]"><Fit w={76} className="pt-px">Pause (Ctrl+P)</Fit></div>
    </div>
  );
}
